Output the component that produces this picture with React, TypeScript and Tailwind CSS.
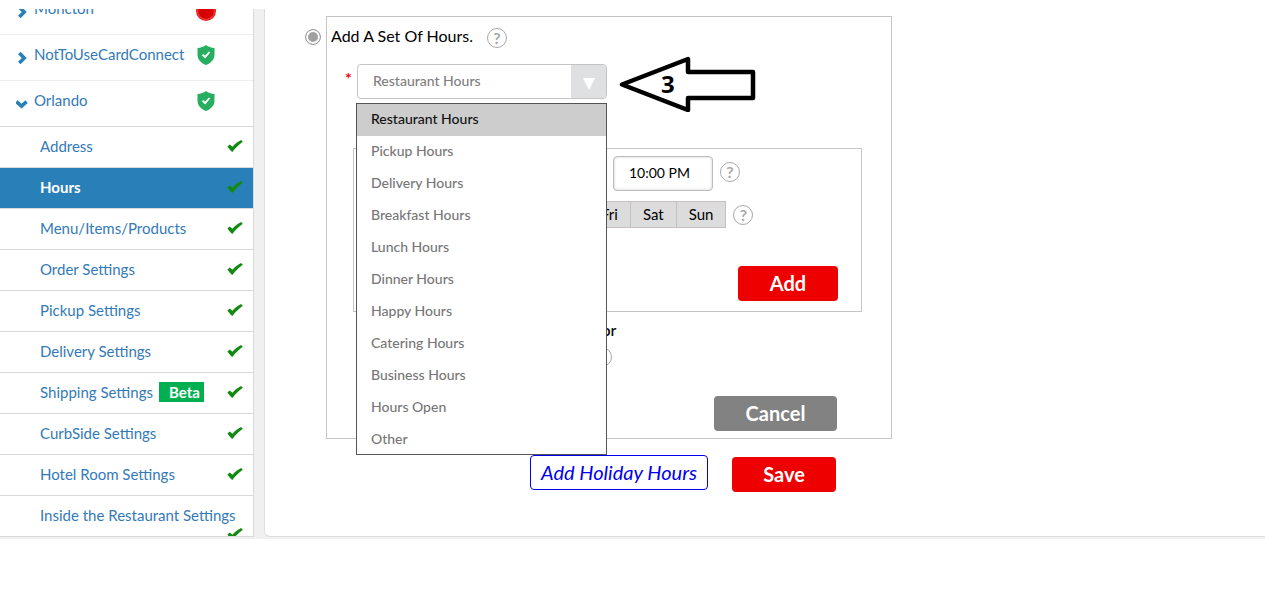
import { useState } from "react";

const hourTypes = [
  "Restaurant Hours",
  "Pickup Hours",
  "Delivery Hours",
  "Breakfast Hours",
  "Lunch Hours",
  "Dinner Hours",
  "Happy Hours",
  "Catering Hours",
  "Business Hours",
  "Hours Open",
  "Other",
];

const settings = [
  { name: "Address" },
  { name: "Hours", active: true },
  { name: "Menu/Items/Products" },
  { name: "Order Settings" },
  { name: "Pickup Settings" },
  { name: "Delivery Settings" },
  { name: "Shipping Settings", beta: true },
  { name: "CurbSide Settings" },
  { name: "Hotel Room Settings" },
];

const days = ["Fri", "Sat", "Sun"];

function Chevron({ open = false }: { open?: boolean }) {
  return open ? (
    <svg className="w-3 h-3 shrink-0" viewBox="0 0 12 12" fill="none" stroke="#2980b9" strokeWidth="3.6">
      <path d="M.4 3.600 5.500 8.200l5.100-4.600" />
    </svg>
  ) : (
    <svg className="w-3 h-3 shrink-0" viewBox="0 0 12 12" fill="none" stroke="#2980b9" strokeWidth="3.6">
      <path d="M3.300 1 8.200 6 3.300 11" />
    </svg>
  );
}

function Shield() {
  return (
    <svg className="w-[18px] h-5 mb-1.5 shrink-0" viewBox="0 0 18 20">
      <path fill="#27ae60" d="M9 0c2.400 1.800 5 2.700 8.500 3v6.500c0 4.800-3.200 8.500-8.500 10.500C3.700 18 .5 14.300.5 9.500V3C4 2.700 6.600 1.800 9 0Z" />
      <path d="m5.600 9.600 2.500 2.600 4.400-5.200" fill="none" stroke="#fff" strokeWidth="1.900" />
    </svg>
  );
}

function StopDot() {
  return (
    <svg className="w-5 h-5 mb-0.5 shrink-0" viewBox="0 0 20 20">
      <circle cx="10" cy="10" r="10" fill="#e8201c" />
      <circle cx="10" cy="10" r="8.300" fill="#d90000" stroke="#f04a48" strokeWidth="0.800" />
    </svg>
  );
}

function Check() {
  return (
    <svg className="w-4 h-3 shrink-0" viewBox="0 0 16 12">
      <path fill="#128a12" d="M.4 6.400 2.800 4.600 5.400 6.800C7.800 4 10.600 1.800 14 0L15.800 1.800C11.800 4.600 8.400 8 5.400 12 3.600 10.600 1.800 8.600.4 6.400Z" />
    </svg>
  );
}

function Help() {
  return (
    <button
      type="button"
      aria-label="Help"
      className="w-5 h-5 shrink-0 rounded-full border border-[#a9a9a9] bg-white text-[#a9a9a9] text-base leading-none font-bold flex items-center justify-center"
    >
      ?
    </button>
  );
}

function Sidebar() {
  return (
    <nav className="w-[254px] shrink-0 bg-white border-r border-[#d9d9d9] text-[#337ab7] text-[15px]">
      <ul className="-mt-5">
        <li className="h-[46px] border-b border-[#eeeeee] flex items-center pl-4">
          <Chevron />
          <a href="#moncton" className="w-[162px] ml-1.5 mb-1.5">Moncton</a>
          <StopDot />
        </li>
        <li className="h-[46px] border-b border-[#eeeeee] flex items-center pl-4">
          <Chevron />
          <a href="#nottouse" className="w-[163px] ml-1.5 mb-1.5">NotToUseCardConnect</a>
          <Shield />
        </li>
        <li className="h-[46px] border-b border-[#d9d9d9] flex items-center pl-4">
          <Chevron open />
          <a href="#orlando" className="w-[163px] ml-1.5 mb-1.5">Orlando</a>
          <Shield />
        </li>
        {settings.map((item) => (
          <li
            key={item.name}
            className={`h-[41px] border-b border-[#d9d9d9] flex items-center pl-10 pr-2.5 pb-0.5 ${
              item.active ? "bg-[#2980b9] text-white font-bold" : ""
            }`}
          >
            <a href="#settings">{item.name}</a>
            {item.beta && (
              <span className="ml-1.5 h-5 pl-2.5 pr-1 bg-[#00b050] text-white font-bold leading-5">Beta</span>
            )}
            <span className="ml-auto">
              <Check />
            </span>
          </li>
        ))}
        <li className="h-[41px] border-b border-[#d9d9d9] overflow-hidden pl-10 pr-2.5">
          <a href="#settings" className="block h-8 leading-[38px] whitespace-nowrap">
            Inside the Restaurant Settings
          </a>
          <span className="flex justify-end">
            <Check />
          </span>
        </li>
      </ul>
    </nav>
  );
}

function HoursSelect() {
  const [value, setValue] = useState(hourTypes[0]);

  return (
    <div className="relative w-[250px]">
      <select
        id="hour-type"
        value={value}
        onChange={(e) => setValue(e.target.value)}
        className="block appearance-none w-full h-[35px] pl-[15px] pb-0.5 rounded border border-[#c4c4c4] bg-white text-sm font-medium text-[#808080]"
      >
        {hourTypes.map((type) => (
          <option key={type}>{type}</option>
        ))}
      </select>
      <span className="absolute top-px right-px bottom-px w-[35px] rounded-r-sm bg-[#dfe0e2] flex items-center justify-center pointer-events-none">
        <svg className="w-3 h-3 mt-1" viewBox="0 0 12 12">
          <path d="M0 0h12L6 12Z" fill="#fff" />
        </svg>
      </span>

      {/* Open list */}
      <ul
        role="listbox"
        className="absolute z-10 top-[39px] -left-px w-[251px] h-[352px] overflow-hidden border border-[#555] bg-white text-sm text-[#777]"
      >
        {hourTypes.map((type) => (
          <li
            key={type}
            role="option"
            aria-selected={type === value}
            onClick={() => setValue(type)}
            className={`h-8 pl-3.5 leading-[30px] font-medium ${
              type === value ? "bg-[#cdcdcd] text-[#111]" : ""
            }`}
          >
            {type}
          </li>
        ))}
      </ul>

      {/* Step marker */}
      <div className="absolute -top-2 left-[262px] w-[138px] h-14 flex items-center pl-[42px]">
        <svg className="absolute inset-0 w-full h-full" viewBox="0 0 138 56" fill="#fff" stroke="#000" strokeWidth="4.500" strokeLinejoin="round">
          <path d="M3 28.500 69 3V16h65v26H69v12Z" />
        </svg>
        <span className="relative text-2xl font-bold text-black font-['Open_Sans',sans-serif]">3</span>
      </div>
    </div>
  );
}

export default function App() {
  return (
    <div className="bg-white pt-[9px] pr-[17px] font-[Lato,sans-serif]">
      <div className="flex overflow-hidden bg-[#f0f0f0] pb-0.5">
        <Sidebar />

        <main className="flex-1 ml-2.5 bg-white border-l border-b border-[#dedede] rounded-bl-md pl-10 pt-[7px]">
          <form onSubmit={(e) => e.preventDefault()}>
            <div className="flex items-start gap-[5px]">
              <input
                id="add-hours"
                type="radio"
                defaultChecked
                className="appearance-none mt-[13px] w-4 h-4 shrink-0 rounded-full border border-[#a0a0a0] bg-[#a0a0a0] shadow-[inset_0_0_0_2px_#fff]"
              />
              <section className="w-full max-w-[566px] h-[423px] border border-[#c8c4c4]">
                <div className="flex items-center gap-3.5 pl-1 pt-[11px]">
                  <label htmlFor="add-hours" className="text-base leading-5 pb-1 -mt-1 h-5">Add A Set Of Hours.</label>
                  <Help />
                </div>

                <div className="flex mt-4 pl-[18px]">
                  <label htmlFor="hour-type" className="w-3 pt-1 text-red-600 font-bold text-base leading-5">*</label>
                  <HoursSelect />
                </div>

                <div className="mt-[49px] ml-[26px] mr-[29px] h-[164px] border border-[#c8c4c4] pt-[7px]">
                  <div className="flex items-start gap-[7px] pl-[259px]">
                    <input
                      aria-label="Closing time"
                      defaultValue="10:00 PM"
                      className="w-[100px] h-[35px] pl-[15px] pb-0.5 rounded border border-[#bdbdbd] text-sm shadow-[inset_0_0_3px_#ccc]"
                    />
                    <span className="pt-1.5">
                      <Help />
                    </span>
                  </div>
                  <div className="flex items-center gap-[7px] mt-2.5 pl-[234px]">
                    <div className="flex border-l border-[#c8c0c0]">
                      {days.map((day) => (
                        <button
                          key={day}
                          type="button"
                          className="h-[27px] px-3 border border-l-0 border-[#c8c0c0] bg-[#dcdcdc] text-[15px]"
                        >
                          {day}
                        </button>
                      ))}
                    </div>
                    <Help />
                  </div>
                  <div className="flex justify-end mt-[38px] pr-[23px]">
                    <button type="button" className="w-[100px] h-[35px] pb-0.5 rounded bg-[#ee0000] text-white text-xl font-bold">
                      Add
                    </button>
                  </div>
                </div>

                <p className="mt-2 text-center text-base leading-5 font-medium">or</p>
                <div className="mt-[7px] pl-[265px]">
                  <Help />
                </div>
                <div className="flex justify-end mt-[29px] pr-[54px]">
                  <button type="button" className="w-[123px] h-[35px] pb-0.5 rounded bg-[#828282] text-white text-xl font-bold">
                    Cancel
                  </button>
                </div>
              </section>
            </div>

            <div className="flex items-start gap-6 mt-4 pl-[225px] pb-[42px]">
              <button
                type="button"
                className="w-[178px] h-[35px] pb-0.5 rounded border border-[#0000ee] text-[#0000ee] text-xl italic"
              >
                Add Holiday Hours
              </button>
              <button type="submit" className="w-[104px] h-[35px] mt-0.5 pb-0.5 rounded bg-[#ee0000] text-white text-xl font-bold">
                Save
              </button>
            </div>
          </form>
        </main>
      </div>
    </div>
  );
}
